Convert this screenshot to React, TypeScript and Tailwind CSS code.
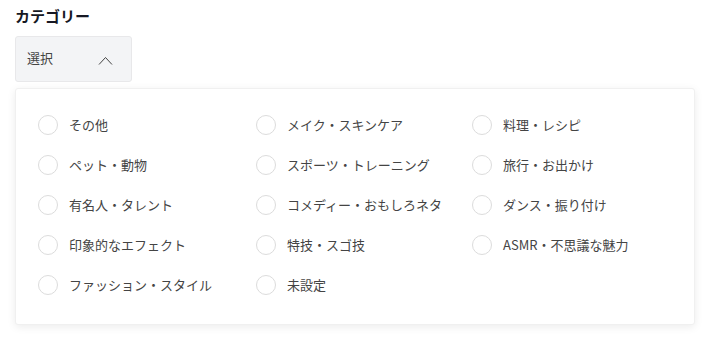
import React from "react";

const items = [
  "その他",
  "メイク・スキンケア",
  "料理・レシピ",
  "ペット・動物",
  "スポーツ・トレーニング",
  "旅行・お出かけ",
  "有名人・タレント",
  "コメディー・おもしろネタ",
  "ダンス・振り付け",
  "印象的なエフェクト",
  "特技・スゴ技",
  "ASMR・不思議な魅力",
  "ファッション・スタイル",
  "未設定",
];

export default function App() {
  return (
    <div
      className="w-[707px] h-[337px] bg-white text-[#222] px-[15px] pt-[5px]"
      style={{ fontFamily: '"Noto Sans CJK JP", "Noto Sans", sans-serif' }}
    >
      <div className="text-[15px] font-bold leading-[22px] h-[22px] text-[#161823]">カテゴリー</div>
      <div className="mt-[9px] w-[117px] h-[46px] rounded-[3px] border border-[#e8e8ea] bg-[#f3f4f6] flex items-center pl-[11px] pr-[18px] justify-between">
        <span className="text-[13px] text-[#444] leading-none -mt-[4px]">選択</span>
        <svg width="15" height="9" viewBox="0 0 15 9" className="mt-[3px]">
          <path d="M1 8.5 L7.5 1.5 L14 8.5" fill="none" stroke="#444" strokeWidth="1" />
        </svg>
      </div>
      <div className="mt-[6px] w-[680px] h-[237px] rounded-[3px] border border-[#f0f0f0] bg-white shadow-[0_2px_8px_rgba(0,0,0,0.08)] pl-[22px] pt-[16px]">
        <div className="grid grid-cols-[218px_216px_1fr]">
          {items.map((t) => (
            <div key={t} className="h-[40px] flex items-center">
              <span className="w-[20px] h-[20px] rounded-full border border-[#dcdcdc] bg-white shrink-0" />
              <span className="ml-[11px] text-[13px] text-[#444] whitespace-nowrap">{t}</span>
            </div>
          ))}
        </div>
      </div>
    </div>
  );
}
